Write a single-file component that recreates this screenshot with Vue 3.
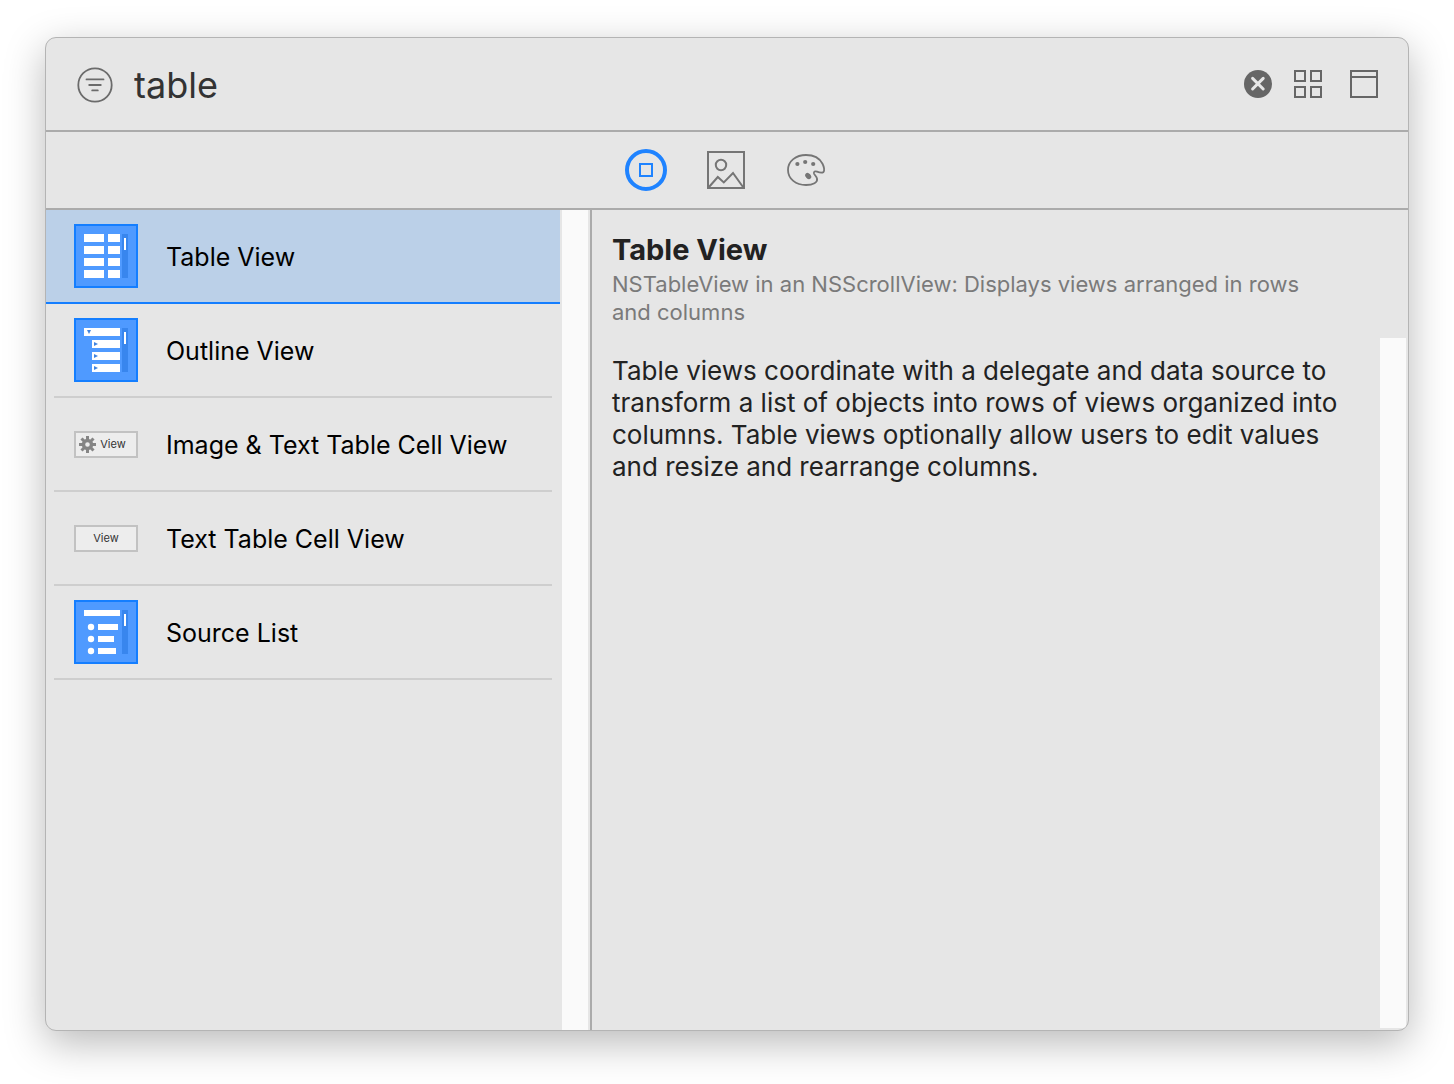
<script setup>
import { ref, computed } from 'vue'

const query = ref('table')
const scope = ref('objects')
const selected = ref(0)

const items = [
  {
    name: 'Table View',
    icon: 'table',
    summary: 'NSTableView in an NSScrollView: Displays views arranged in rows and columns',
    text: 'Table views coordinate with a delegate and data source to transform a list of objects into rows of views organized into columns. Table views optionally allow users to edit values and resize and rearrange columns.',
  },
  { name: 'Outline View', icon: 'outline', summary: '', text: '' },
  { name: 'Image & Text Table Cell View', icon: 'imageCell', summary: '', text: '' },
  { name: 'Text Table Cell View', icon: 'textCell', summary: '', text: '' },
  { name: 'Source List', icon: 'source', summary: '', text: '' },
]

const current = computed(() => items[selected.value])
const teeth = [0, 45, 90, 135, 180, 225, 270, 315]
const rows = [10, 22, 34, 46]
</script>

<template>
  <main class="library">
    <header class="search">
      <div class="field">
        <button class="icon-button" type="button" aria-label="Filter">
          <svg width="36" height="36" viewBox="0 0 36 36" fill="none" stroke="#6b6b6b" stroke-width="2">
            <circle cx="18" cy="18" r="16.7" stroke-width="1.8" />
            <path d="M9.500 12.4H26.500M12.200 18H23.800M15.200 23.4H20.800" stroke-linecap="round" stroke-width="1.8" />
          </svg>
        </button>
        <input v-model="query" class="query" type="text" aria-label="Search library" spellcheck="false" />
      </div>
      <div class="tools">
        <button class="icon-button" type="button" aria-label="Clear" @click="query = ''">
          <svg width="28" height="28" viewBox="0 0 28 28">
            <circle cx="14" cy="14" r="14" fill="#666" />
            <path d="M8.6 8.4L19.2 19M19.2 8.4L8.6 19" stroke="#e6e6e6" stroke-width="3" stroke-linecap="round" />
          </svg>
        </button>
        <button class="icon-button" type="button" aria-label="Icon view">
          <svg class="grid" width="28" height="28" viewBox="0 0 28 28" fill="none" stroke="#666" stroke-width="2">
            <path d="M1 1H11V11H1ZM17 1H27V11H17ZM1 17H11V27H1ZM17 17H27V27H17Z" />
          </svg>
        </button>
        <button class="icon-button" type="button" aria-label="Toggle details">
          <svg width="28" height="28" viewBox="0 0 28 28" fill="none" stroke="#666" stroke-width="2">
            <path d="M1 1H27V27H1ZM1 7H27" />
          </svg>
        </button>
      </div>
    </header>

    <nav class="scopes" aria-label="Library section">
      <button class="icon-button" type="button" aria-label="Objects" @click="scope = 'objects'">
        <svg width="42" height="42" viewBox="0 0 42 42" fill="none" stroke="#1f83ff">
          <circle cx="21" cy="21" r="19" stroke-width="4" />
          <path d="M15 15H27V27H15Z" stroke-width="2" />
        </svg>
      </button>
      <button class="icon-button" type="button" aria-label="Media" @click="scope = 'media'">
        <svg width="42" height="42" viewBox="0 0 42 42" fill="none" stroke="#757575" stroke-width="2">
          <path d="M3 3H39V39H3Z" />
          <circle cx="16" cy="16" r="5.2" />
          <path d="M4 38L12.8 28L18.8 33.4L28 24L38 38" />
        </svg>
      </button>
      <button class="icon-button" type="button" aria-label="Colors" @click="scope = 'colors'">
        <svg width="42" height="42" viewBox="0 0 42 42" fill="none" stroke="#757575" stroke-width="1.8">
          <path d="M21 6C11 6 3 12 3 21C3 30 11 36 21 36C28 36 33 33.500 32 29.500C31.500 27.500 29.500 26 29 24.500C28.500 22.500 30 22 32 22.600C34.500 23.600 37 24.200 38.500 23C39.800 21.800 39 17.500 37.500 14.700C34.500 9 28 6 21 6Z" />
          <g fill="#757575" stroke="none">
            <circle cx="12.400" cy="15" r="2.100" />
            <circle cx="20.200" cy="13" r="2.100" />
            <circle cx="28.200" cy="15" r="2.100" />
            <ellipse cx="23.200" cy="27" rx="3.500" ry="2.500" transform="rotate(48 23.200 27)" />
          </g>
        </svg>
      </button>
    </nav>

    <div class="content">
      <section class="list-pane" aria-label="Results">
        <ul class="list">
          <li v-for="(item, i) in items" :key="item.name" class="item" :class="{ selected: i === selected }">
            <button class="item-button" type="button" @click="selected = i">
              <svg v-if="item.icon === 'imageCell' || item.icon === 'textCell'" class="thumb" width="64" height="64" viewBox="0 0 64 64">
                <rect x="1" y="20" width="62" height="25" fill="#ededed" stroke="#c2c2c2" stroke-width="2" />
                <g v-if="item.icon === 'imageCell'" fill="#858585">
                  <rect v-for="a in teeth" :key="a" x="12" y="24" width="3" height="5" :transform="`rotate(${a} 13.500 32.500)`" />
                  <circle cx="13.500" cy="32.500" r="4" fill="none" stroke="#858585" stroke-width="3.400" />
                </g>
                <text :x="item.icon === 'imageCell' ? 39 : 32" y="36" class="cell-text">View</text>
              </svg>
              <svg v-else class="thumb" width="64" height="64" viewBox="0 0 64 64" fill="#fff">
                <rect x="1" y="1" width="62" height="62" fill="#4f9aff" stroke="#147eff" stroke-width="2" />
                <rect x="48" y="10" width="6" height="44" fill="#3886ee" />
                <rect x="50" y="14" width="2" height="12" />
                <template v-if="item.icon === 'table'">
                  <path v-for="y in rows" :key="y" :d="`M10 ${y}h20v8h-20zM34 ${y}h12v8h-12z`" />
                </template>
                <template v-else-if="item.icon === 'outline'">
                  <path d="M10 10h36v8h-36zM18 22h28v8h-28zM18 34h28v8h-28zM18 46h28v8h-28z" />
                  <path d="M13 12h4l-2 4zM20 24v4l4-2zM20 36v4l4-2zM20 48v4l4-2z" fill="#4084e0" />
                </template>
                <template v-else>
                  <path d="M10 10h36v6h-36zM24 24h20v6h-20zM24 36h16v6h-16zM24 48h18v6h-18z" />
                  <circle cx="17" cy="27" r="3.200" />
                  <circle cx="17" cy="39" r="3.200" />
                  <circle cx="17" cy="51" r="3.200" />
                </template>
              </svg>
              <span class="label">{{ item.name }}</span>
            </button>
          </li>
        </ul>
        <div class="track"></div>
      </section>

      <article class="detail">
        <header class="detail-head">
          <h1>{{ current.name }}</h1>
          <p class="summary">{{ current.summary }}</p>
        </header>
        <div class="detail-body">
          <p class="text">{{ current.text }}</p>
          <div class="track"></div>
        </div>
      </article>
    </div>
  </main>
</template>

<style>
body {
  background: #fff;
}
#app {
  display: flex;
  min-height: 100vh;
}
</style>

<style scoped>
.library {
  flex: 1;
  min-width: 0;
  display: flex;
  flex-direction: column;
  margin: 37px 45px 53px;
  box-sizing: border-box;
  border: 1px solid #b4b4b4;
  border-radius: 11px;
  overflow: hidden;
  background: #e6e6e6;
  box-shadow: 0 12px 40px rgba(0, 0, 0, 0.28);
  font-family: Inter, "Liberation Sans", sans-serif;
  color: #000;
}
button {
  font: inherit;
  color: inherit;
  background: none;
  border: 0;
  padding: 0;
  text-align: left;
}
svg {
  display: block;
}
.search {
  display: flex;
  align-items: center;
  height: 92px;
  padding: 0 30px 0 31px;
  border-bottom: 2px solid #ababab;
}
.field {
  flex: 1;
  min-width: 0;
  display: flex;
  align-items: center;
  gap: 21px;
  padding-top: 2px;
}
.query {
  flex: 1;
  min-width: 0;
  padding: 0;
  border: 0;
  outline: 0;
  background: none;
  font: 400 36px/48px Inter, "Liberation Sans", sans-serif;
  color: #333;
}
.tools {
  display: flex;
  align-items: center;
  gap: 28px;
}
.grid {
  margin-left: -6px;
}
.scopes {
  display: flex;
  align-items: center;
  justify-content: center;
  gap: 38px;
  height: 76px;
  padding-right: 2px;
  border-bottom: 2px solid #ababab;
}
.content {
  flex: 1;
  display: flex;
}
.list-pane {
  display: flex;
  gap: 2px;
  flex: 0 0 546px;
  box-sizing: border-box;
  padding-right: 2px;
  border-right: 2px solid #ababab;
}
.list {
  flex: 1;
  margin: 0;
  padding: 0;
  list-style: none;
}
.item {
  margin: 0 8px;
  border-bottom: 2px solid #cecece;
}
.item.selected {
  margin: 0;
  padding: 0 8px;
  border-color: #147eff;
  background: #bbd0e8;
}
.item-button {
  display: flex;
  align-items: center;
  gap: 28px;
  width: 100%;
  height: 92px;
  padding: 0 20px;
  font-size: 25px;
  line-height: 32px;
  white-space: nowrap;
}
.thumb {
  flex: none;
}
.label {
  padding-top: 2px;
}
.cell-text {
  font-size: 11px;
  text-anchor: middle;
  fill: #333;
}
.track {
  flex: none;
  width: 26px;
  background: #fafafa;
}
.detail {
  flex: 1;
  min-width: 0;
  display: flex;
  flex-direction: column;
  color: #222;
}
.detail-head {
  box-sizing: border-box;
  min-height: 128px;
  padding: 22px 80px 10px 20px;
}
h1 {
  margin: 0;
  font-size: 29px;
  line-height: 36px;
  font-weight: 700;
}
.summary {
  margin: 2px 0 0;
  font-size: 22px;
  line-height: 28px;
  color: #7a7a7a;
}
.detail-body {
  flex: 1;
  display: flex;
  padding: 0 2px 2px 20px;
}
.text {
  flex: 1;
  margin: 0;
  padding: 17px 36px 0 0;
  font-size: 26px;
  line-height: 32px;
}
</style>
